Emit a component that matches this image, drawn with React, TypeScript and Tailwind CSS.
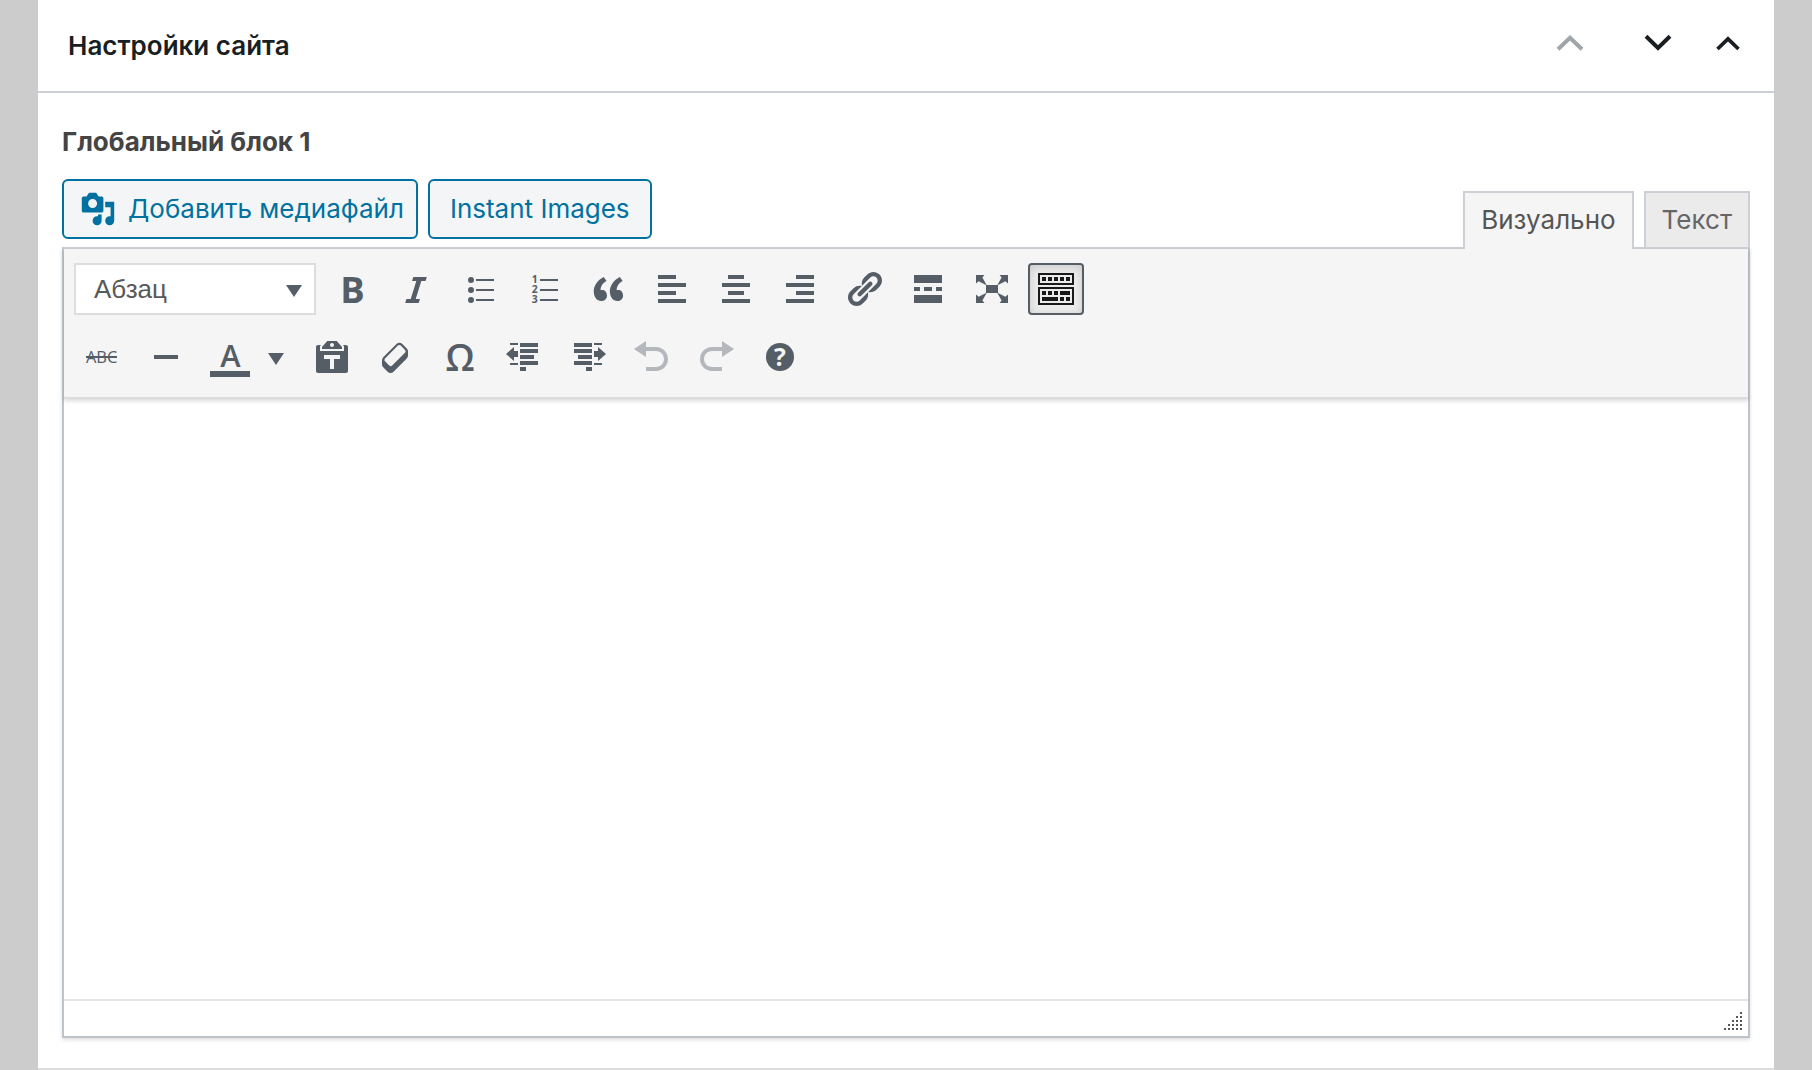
import { useState } from "react";
import type { ReactNode } from "react";

function Icon({ children }: { children: ReactNode }) {
  return (
    <svg
      viewBox="0 0 20 20"
      className="w-10 h-10 overflow-visible"
      fill="currentColor"
      aria-hidden="true"
    >
      {children}
    </svg>
  );
}

function Glyph({
  x,
  y,
  size,
  weight = 700,
  fill,
  children,
}: {
  x: number;
  y: number;
  size: number;
  weight?: number;
  fill?: string;
  children: string;
}) {
  return (
    <text
      x={x}
      y={y}
      fontSize={size}
      fontWeight={weight}
      fill={fill}
      textAnchor="middle"
      fontFamily='"Open Sans", sans-serif'
    >
      {children}
    </text>
  );
}

const Triangle = () => (
  <svg viewBox="0 0 16 12" className="w-4 h-3" fill="#555d66" aria-hidden="true">
    <path d="M0 0h16L8 12z" />
  </svg>
);

const firstRow = [
  { label: "Полужирный", icon: <Glyph x={10.2} y={17} size={18.2}>B</Glyph> },
  {
    label: "Курсив",
    icon: (
      <path d="M14.78 6h-2.13l-2.8 9h2.12l-.62 2H4.6l.62-2h2.14l2.8-9H8.03l.62-2h6.75z" />
    ),
  },
  {
    label: "Маркированный список",
    icon: (
      <>
        <circle cx="5.5" cy="5.5" r="1.5" />
        <circle cx="5.5" cy="10.5" r="1.5" />
        <circle cx="5.5" cy="15.5" r="1.5" />
        <path d="M8 5h9v1H8zM8 10h9v1H8zM8 15h9v1H8z" />
      </>
    ),
  },
  {
    label: "Нумерованный список",
    icon: (
      <>
        <Glyph x={5.4} y={7} size={5.2}>1</Glyph>
        <Glyph x={5.4} y={12} size={5.2}>2</Glyph>
        <Glyph x={5.4} y={17} size={5.2}>3</Glyph>
        <path d="M8 5h9v1H8zM8 10h9v1H8zM8 15h9v1H8z" />
      </>
    ),
  },
  {
    label: "Цитата",
    icon: (
      <path d="M9.49 13.22c0-.74-.2-1.38-.61-1.9-.62-.78-1.83-.88-2.53-.72-.29-1.65 1.11-3.75 2.92-4.65L7.88 4c-2.73 1.3-5.42 4.28-4.96 8.05C3.21 14.43 4.59 16 6.54 16c.85 0 1.56-.25 2.12-.75s.83-1.18.83-2.03zm8.05 0c0-.74-.2-1.38-.61-1.9-.63-.78-1.83-.88-2.53-.72-.29-1.65 1.11-3.75 2.92-4.65L15.93 4c-2.73 1.3-5.41 4.28-4.95 8.05.29 2.38 1.66 3.95 3.61 3.95.85 0 1.56-.25 2.12-.75s.83-1.18.83-2.03z" />
    ),
  },
  {
    label: "По левому краю",
    icon: <path d="M3 3h9v2H3zM3 7h14v2H3zM3 11h9v2H3zM3 15h14v2H3z" />,
  },
  {
    label: "По центру",
    icon: <path d="M6 3h8v2H6zM3 7h14v2H3zM6 11h8v2H6zM3 15h14v2H3z" />,
  },
  {
    label: "По правому краю",
    icon: <path d="M8 3h9v2H8zM3 7h14v2H3zM8 11h9v2H8zM3 15h14v2H3z" />,
  },
  {
    label: "Вставить ссылку",
    icon: (
      <path d="M17.74 2.76c1.68 1.69 1.68 4.41 0 6.1l-1.53 1.52c-1.12 1.12-2.7 1.47-4.14 1.09l2.62-2.61.76-.77.76-.76c.84-.84.84-2.2 0-3.04-.84-.85-2.2-.85-3.04 0l-.77.76-3.38 3.38c-.37-1.44-.02-3.02 1.1-4.14l1.52-1.53c1.69-1.68 4.42-1.68 6.1 0zM8.59 13.43l5.34-5.34c.42-.42.42-1.1 0-1.52-.44-.43-1.13-.39-1.53 0l-5.33 5.34c-.42.42-.42 1.1 0 1.52.44.43 1.13.39 1.52 0zm-.76 2.29l4.14-4.15c.38 1.44.03 3.02-1.09 4.14l-1.52 1.53c-1.69 1.68-4.41 1.68-6.1 0-1.68-1.68-1.68-4.42 0-6.1l1.53-1.52c1.12-1.12 2.7-1.47 4.14-1.1l-4.14 4.15c-.85.84-.85 2.2 0 3.05.84.84 2.2.84 3.04 0z" />
    ),
  },
  {
    label: "Тег «Далее»",
    icon: (
      <path d="M3 3h14v4H3zM3 9h3v2H3zM8 9h4v2H8zM14 9h3v2h-3zM3 13h14v4H3z" />
    ),
  },
  {
    label: "На весь экран",
    icon: (
      <path d="M7 8h6v4H7zM2 3h4.200l-1 1.300L7.300 8H7L3.300 6.100 2 7.300zM18 3h-4.200l1 1.300L12.700 8h.3l3.700-1.900L18 7.300zM2 17h4.200l-1-1.300L7.300 12H7l-3.700 1.900L2 12.700zM18 17h-4.200l1-1.300L12.700 12h.3l3.700 1.900 1.300-1.200z" />
    ),
  },
];

const pasteIcon = (
  <path d="M12.38 2L15 5v1H5V5l2.64-3h4.74zM10 5c.55 0 1-.44 1-1 0-.55-.45-1-1-1s-1 .45-1 1c0 .56.45 1 1 1zm5.45-1H17c.55 0 1 .45 1 1v12c0 .56-.45 1-1 1H3c-.55 0-1-.44-1-1V5c0-.55.45-1 1-1h1.55L4 4.63V7h12V4.63zM14 11V9H6v2h3v5h2v-5h3z" />
);

const secondRow = [
  { label: "Вставить как текст", icon: pasteIcon },
  {
    label: "Очистить форматирование",
    icon: (
      <path d="M14.29 4.59l1.1 1.11c.41.4.61.94.61 1.47v2.12c0 .53-.2 1.07-.61 1.47l-6.63 6.63c-.4.41-.94.61-1.47.61s-1.07-.2-1.47-.61l-1.11-1.1-1.1-1.11c-.41-.4-.61-.94-.61-1.47v-2.12c0-.54.2-1.07.61-1.48l6.63-6.62c.4-.41.94-.61 1.47-.61s1.06.2 1.47.61zm-6.21 9.7l6.42-6.42c.39-.39.39-1.03 0-1.43L12.36 4.3c-.19-.19-.45-.29-.72-.29s-.52.1-.71.29l-6.42 6.42c-.39.4-.39 1.04 0 1.43l2.14 2.14c.38.38 1.04.38 1.43 0z" />
    ),
  },
  {
    label: "Произвольный символ",
    icon: <Glyph x={10} y={17} size={18.6} weight={600}>Ω</Glyph>,
  },
  {
    label: "Уменьшить отступ",
    icon: (
      <path d="M3 3h4v1H3zM8 3h9v2H8zM8 6h9v2H8zM8 9h7v2H8zM8 12h9v2H8zM8 15h3v2H8zM3 13h4v1H3zM1 8.5L5 5v2h2v3H5v2z" />
    ),
  },
  {
    label: "Увеличить отступ",
    icon: (
      <path d="M13 3h4v1h-4zM3 3h9v2H3zM3 6h9v2H3zM5 9h7v2H5zM3 12h9v2H3zM9 15h3v2H9zM13 13h4v1h-4zM19 8.5L15 5v2h-2v3h2v2z" />
    ),
  },
  {
    label: "Отменить",
    disabled: true,
    icon: (
      <path d="M12 5H7V2L1 6l6 4V7h5c2.2 0 4 1.8 4 4s-1.8 4-4 4H7v2h5c3.3 0 6-2.7 6-6s-2.7-6-6-6z" />
    ),
  },
  {
    label: "Повторить",
    disabled: true,
    icon: (
      <path d="M8 5h5V2l6 4-6 4V7H8c-2.2 0-4 1.8-4 4s1.8 4 4 4h5v2H8c-3.3 0-6-2.7-6-6s2.7-6 6-6z" />
    ),
  },
  {
    label: "Горячие клавиши",
    icon: (
      <>
        <circle cx="10" cy="10" r="7" />
        <Glyph x={10} y={14.4} size={12.4} fill="#f5f5f5">?</Glyph>
      </>
    ),
  },
];

function ToolButton({
  label,
  disabled,
  children,
}: {
  label: string;
  disabled?: boolean;
  children: ReactNode;
}) {
  return (
    <button
      type="button"
      aria-label={label}
      disabled={disabled}
      className="flex items-center justify-center w-14 h-13 text-[#555d66] disabled:opacity-40"
    >
      <Icon>{children}</Icon>
    </button>
  );
}

function Chevron({ d, width = 4 }: { d: string; width?: number }) {
  return (
    <svg
      viewBox="0 0 40 40"
      className="w-10 h-10"
      fill="none"
      stroke="currentColor"
      strokeWidth={width}
      aria-hidden="true"
    >
      <path d={d} />
    </svg>
  );
}

export default function App() {
  const [tab, setTab] = useState("visual");
  const tabBase = "px-4 border-2 border-b-0 border-[#ccd0d4]";
  const tabActive = "h-[58px] pb-[2px] bg-[#f5f5f5] text-[#555]";
  const tabIdle = "h-14 bg-[#ebebeb] text-[#666]";

  return (
    <div className="min-h-screen bg-[#ccc] px-[38px] font-['Inter',sans-serif] text-[26px] leading-8 text-[#444]">
      <section className="bg-white border-b-2 border-[#ddd]">
        <header className="flex items-center justify-between pl-[30px] pr-5 h-[93px] border-b-2 border-[#ccd0d4]">
          <h2 className="font-semibold text-[#191e23]">Настройки сайта</h2>
          <div className="flex items-center pb-[5px] text-[#191e23]">
            <button
              type="button"
              aria-label="Вверх"
              disabled
              className="flex justify-center w-22 text-[#a0a5aa]"
            >
              <Chevron d="M8 26.3L20 14.700l12 11.600" />
            </button>
            <button
              type="button"
              aria-label="Вниз"
              className="flex justify-center w-22"
            >
              <Chevron d="M8 13.300l12 11.600 12-11.600" />
            </button>
            <button
              type="button"
              aria-label="Свернуть"
              className="flex justify-center w-13"
            >
              <Chevron d="M9.500 26L20 15.800 30.500 26" width={3.7} />
            </button>
          </div>
        </header>

        <div className="px-6 pt-[33px] pb-[30px]">
          <label htmlFor="editor" className="block font-bold">
            Глобальный блок 1
          </label>

          <div className="flex items-end justify-between pt-[21px]">
            <div className="flex gap-[10px] pb-2 text-[#0071a1]">
              <button
                type="button"
                className="flex items-center gap-3 h-15 pl-4 pr-3 border-2 border-[#0071a1] rounded-md bg-[#f3f5f6]"
              >
                <svg
                  viewBox="0 0 20 20"
                  className="w-9 h-9"
                  fill="currentColor"
                  aria-hidden="true"
                >
                  <path d="M13 11V4c0-.55-.45-1-1-1h-1.67L9 1H5L3.67 3H2c-.55 0-1 .45-1 1v7c0 .55.45 1 1 1h10c.55 0 1-.45 1-1zM7 4.500c1.380 0 2.500 1.120 2.500 2.500S8.380 9.500 7 9.500 4.500 8.380 4.500 7 5.620 4.500 7 4.500zM14 6h5v10.500c0 1.380-1.120 2.500-2.500 2.500S14 17.880 14 16.500s1.120-2.500 2.500-2.500c.17 0 .34.02.5.05V9h-3V6zm-4 8.050V13h2v3.500c0 1.380-1.120 2.500-2.500 2.500S7 17.880 7 16.500 8.120 14 9.500 14c.17 0 .34.02.5.05z" />
                </svg>
                Добавить медиафайл
              </button>
              <button
                type="button"
                className="h-15 px-5 border-2 border-[#0071a1] rounded-md bg-[#f3f5f6]"
              >
                Instant Images
              </button>
            </div>
            <div className="relative z-10 flex gap-[10px] -mb-[2px]">
              <button
                type="button"
                onClick={() => setTab("visual")}
                className={`${tabBase} ${tab == "visual" ? tabActive : tabIdle}`}
              >
                Визуально
              </button>
              <button
                type="button"
                onClick={() => setTab("text")}
                className={`${tabBase} ${tab == "text" ? tabActive : tabIdle}`}
              >
                Текст
              </button>
            </div>
          </div>

          <div className="border-2 border-[#bdc3c8] border-t-[#ccd0d4] shadow-[0_2px_4px_rgba(0,0,0,0.13)]">
            <div className="relative flex flex-col gap-4 px-[10px] py-[14px] bg-[#f5f5f5] border-b-2 border-[#ddd] shadow-[0_2px_4px_rgba(0,0,0,0.15)]">
              <div className="flex flex-wrap gap-2">
                <div className="relative">
                  <select
                    aria-label="Формат"
                    className="appearance-none w-[242px] h-13 pl-[18px] border-2 border-[#ddd] bg-white font-['Liberation_Sans',sans-serif] text-[#595959]"
                  >
                    <option>Абзац</option>
                  </select>
                  <span className="absolute right-[14px] top-[22px] pointer-events-none">
                    <Triangle />
                  </span>
                </div>
                {firstRow.map((item) => (
                  <ToolButton key={item.label} label={item.label}>
                    {item.icon}
                  </ToolButton>
                ))}
                <button
                  type="button"
                  aria-label="Панель инструментов"
                  aria-pressed="true"
                  className="flex items-center justify-center w-14 h-13 border-2 border-[#555d66] rounded-sm bg-[#ebebeb] text-[#191919] shadow-[inset_0_2px_8px_rgba(0,0,0,0.15)]"
                >
                  <Icon>
                    <path d="M19 2v6H1V2h18zm-1 5V3H2v4h16zM5 4v2H3V4h2zm3 0v2H6V4h2zm3 0v2H9V4h2zm3 0v2h-2V4h2zm3 0v2h-2V4h2zm2 5v9H1V9h18zm-1 8v-7H2v7h16zM5 11v2H3v-2h2zm3 0v2H6v-2h2zm3 0v2H9v-2h2zm6 0v2h-5v-2h5zm-6 3v2H3v-2h8zm3 0v2h-2v-2h2zm3 0v2h-2v-2h2z" />
                  </Icon>
                </button>
              </div>

              <div className="flex flex-wrap gap-2">
                <ToolButton label="Зачёркнутый">
                  <Glyph x={9.8} y={13} size={8.2} weight={400}>ABC</Glyph>
                  <path d="M2 9.500h15.500v1H2z" />
                </ToolButton>
                <ToolButton label="Горизонтальная линия">
                  <path d="M4 9h12v2H4z" />
                </ToolButton>
                <div className="flex">
                  <ToolButton label="Цвет текста">
                    <Glyph x={10.2} y={15} size={15.4} weight={600}>A</Glyph>
                    <path d="M0 17h20v3H0z" />
                  </ToolButton>
                  <button
                    type="button"
                    aria-label="Выбрать цвет"
                    className="flex items-center w-[38px] h-13 pt-1 pl-[10px]"
                  >
                    <Triangle />
                  </button>
                </div>
                {secondRow.map((item) => (
                  <ToolButton
                    key={item.label}
                    label={item.label}
                    disabled={item.disabled}
                  >
                    {item.icon}
                  </ToolButton>
                ))}
              </div>
            </div>

            <textarea
              id="editor"
              className="block w-full h-[600px] p-5 resize-none outline-none"
            />

            <div className="flex justify-end items-end h-[37px] pr-[6px] pb-[6px] border-t-2 border-[#e5e5e5]">
              <svg
                viewBox="0 0 9 9"
                className="w-[18px] h-[18px]"
                fill="#555"
                shapeRendering="crispEdges"
                aria-hidden="true"
              >
                <path d="M8 0h1v1H8zM6 2h1v1H6zM8 2h1v1H8zM4 4h1v1H4zM6 4h1v1H6zM8 4h1v1H8zM2 6h1v1H2zM4 6h1v1H4zM6 6h1v1H6zM8 6h1v1H8zM0 8h1v1H0zM2 8h1v1H2zM4 8h1v1H4zM6 8h1v1H6zM8 8h1v1H8z" />
              </svg>
            </div>
          </div>
        </div>
      </section>
    </div>
  );
}
